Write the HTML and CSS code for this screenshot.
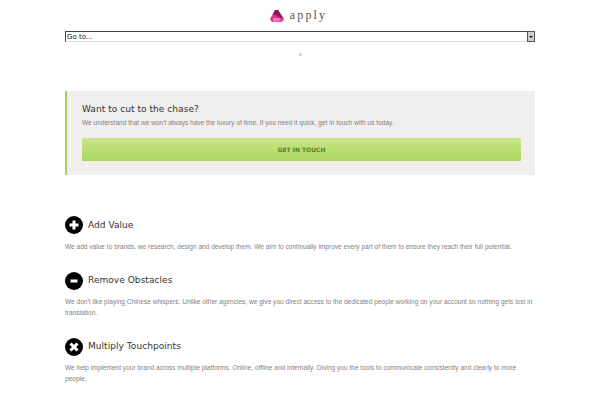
FILE: index.html
```html
<!DOCTYPE html>
<html lang="en">
<head>
<meta charset="utf-8">
<title>Apply</title>
<link rel="stylesheet" href="styles.css">
</head>
<body>
<div class="page">
  <header class="logo">
    <svg class="logo-mark" width="14" height="12" viewBox="0 0 14 12"><polygon points="5,0 8,0 14,9 12,12 2,12 0,9" fill="#d8358f"/><polygon points="5,0 8,0 13,8 9,7 6,5 3,5" fill="#8a1a58"/><polygon points="3,8 9,8 12,11 3,12" fill="#ee7ab8"/></svg>
    <span class="logo-text">apply</span>
  </header>
  <div class="goto">
    <span class="goto-label">Go to...</span>
    <span class="goto-btn"><span class="goto-arrow"></span></span>
  </div>
  <div class="dot"></div>
  <section class="cta">
    <h2 class="cta-title">Want to cut to the chase?</h2>
    <p class="text">We understand that we won't always have the luxury of time. If you need it quick, get in touch with us today.</p>
    <a class="cta-button">GET IN TOUCH</a>
  </section>
  <section class="feature feature-first">
    <div class="feature-head">
      <svg class="icon" viewBox="0 0 18 18"><circle cx="9" cy="9" r="9"/><path d="M9 4.5v9M4.5 9h9" stroke="#fff" stroke-width="3"/></svg>
      <h3 class="feature-title">Add Value</h3>
    </div>
    <p class="text">We add value to brands, we research, design and develop them. We aim to continually improve every part of them to ensure they reach their full potential.</p>
  </section>
  <section class="feature">
    <div class="feature-head">
      <svg class="icon" viewBox="0 0 18 18"><circle cx="9" cy="9" r="9"/><path d="M5.5 9h7" stroke="#fff" stroke-width="3"/></svg>
      <h3 class="feature-title">Remove Obstacles</h3>
    </div>
    <p class="text">We don't like playing Chinese whispers. Unlike other agencies, we give you direct access to the dedicated people working on your account so nothing gets lost in translation.</p>
  </section>
  <section class="feature">
    <div class="feature-head">
      <svg class="icon" viewBox="0 0 18 18"><circle cx="9" cy="9" r="9"/><path d="M5.5 5.5l7 7M12.5 5.5l-7 7" stroke="#fff" stroke-width="3"/></svg>
      <h3 class="feature-title">Multiply Touchpoints</h3>
    </div>
    <p class="text">We help implement your brand across multiple platforms. Online, offline and internally. Giving you the tools to communicate consistently and clearly to more people.</p>
  </section>
</div>
</body>
</html>
```
FILE: styles.css
```css
html, body { margin: 0; padding: 0; background: #fff; overflow: hidden; }
.page { width: 470px; margin: 0 auto; font-family: "Liberation Sans", sans-serif; color: #333; }
.logo { height: 31px; display: flex; align-items: center; justify-content: center; gap: 6px; padding-right: 3px; }
.logo-mark { display: block; }
.logo-text { font-family: "Liberation Serif", serif; font-size: 12px; letter-spacing: 2.2px; color: #555; }
.goto { height: 9px; border-top: 1px solid #444; border-left: 1px solid #444; border-bottom: 1px solid #ddd; display: flex; justify-content: space-between; align-items: center; }
.goto-label { font-family: "DejaVu Sans", sans-serif; font-size: 7px; color: #222; padding-left: 1px; }
.goto-btn { width: 6px; height: 9px; background: #ccc; border: 1px solid #555; display: flex; align-items: center; justify-content: center; }
.goto-arrow { width: 0; height: 0; border: 2px solid transparent; border-top: 2px solid #111; border-bottom: 0; }
.dot { width: 3px; height: 3px; background: #d5d5d5; margin: 11px auto 0; }
.cta { margin-top: 35px; height: 84px; box-sizing: border-box; padding: 12px 14px 0 15px; background: #f0efee; border-left: 2px solid #a6d35d; }
.cta-title, .feature-title { margin: 0; font-family: "DejaVu Sans", sans-serif; font-size: 9px; line-height: 13px; font-weight: 400; color: #333; letter-spacing: 0.05px; }
.text { margin: 0; font-size: 6.5px; line-height: 10.5px; color: #808080; letter-spacing: 0.03px; }
.cta .text { margin-top: 2px; }
.cta-button { display: block; margin-top: 9.5px; height: 23px; line-height: 23px; text-align: center; border-radius: 1px; background: linear-gradient(#cbe68a, #a9d45c); font-family: "DejaVu Sans", sans-serif; font-size: 6px; font-weight: 700; color: #5a7a2a; }
.feature { margin-top: 19.5px; }
.feature-first { margin-top: 41px; }
.feature-head { display: flex; align-items: center; gap: 5px; height: 18px; }
.icon { width: 18px; height: 18px; fill: #000; display: block; }
.feature .text { margin-top: 7.5px; }
```
